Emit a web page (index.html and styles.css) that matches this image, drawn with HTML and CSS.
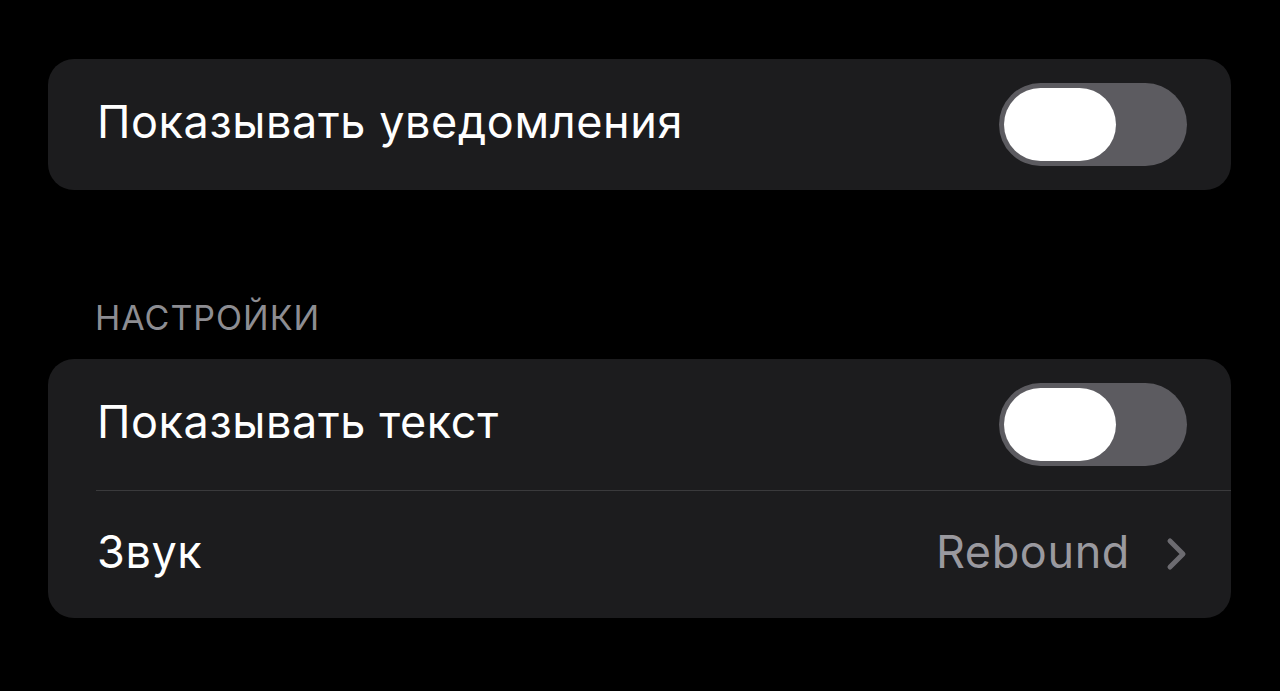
FILE: index.html
```html
<!DOCTYPE html>
<html lang="ru">
<head>
<meta charset="utf-8">
<title>Уведомления</title>
<link rel="stylesheet" href="styles.css">
</head>
<body>
<main class="settings">
  <section class="group">
    <div class="row">
      <span class="label">Показывать уведомления</span>
      <span class="switch"><span class="knob"></span></span>
    </div>
  </section>

  <h2 class="group-title">НАСТРОЙКИ</h2>
  <section class="group">
    <div class="row">
      <span class="label">Показывать текст</span>
      <span class="switch"><span class="knob"></span></span>
    </div>
    <div class="row row-link">
      <span class="label">Звук</span>
      <span class="value">Rebound
        <svg class="chevron" viewBox="0 0 22 34" width="22" height="34" aria-hidden="true">
          <path d="M4 4 L17 17 L4 30" fill="none" stroke="currentColor" stroke-width="5" stroke-linecap="round" stroke-linejoin="round"/>
        </svg>
      </span>
    </div>
  </section>
</main>
</body>
</html>
```
FILE: styles.css
```css
* { box-sizing: border-box; }

html, body {
  margin: 0;
  height: 100%;
  background: #000;
}

body {
  font-family: "Inter", "Liberation Sans", sans-serif;
  color: #fff;
}

.settings {
  padding: 59px 49px 0 48px;
  display: flex;
  flex-direction: column;
}

.group {
  background: #1c1c1e;
  border-radius: 26px;
  overflow: hidden;
}

.row {
  display: flex;
  align-items: center;
  justify-content: space-between;
  height: 131px;
  padding: 0 44px 0 49px;
  position: relative;
}

.row + .row::before {
  content: "";
  position: absolute;
  top: 0;
  left: 48px;
  right: 0;
  height: 1px;
  background: #3a3a3c;
}

.row-link { height: 128px; }

.label {
  font-size: 45px;
  letter-spacing: 0.6px;
  line-height: 1;
  margin-bottom: 6px;
}

.group-title {
  margin: 111px 0 24px 47px;
  font-size: 34px;
  font-weight: 400;
  color: #8d8d92;
  letter-spacing: 1px;
  line-height: 1;
}

.switch {
  width: 188px;
  height: 83px;
  border-radius: 42px;
  background: #5c5b60;
  padding: 5px;
  display: flex;
}

.knob {
  width: 112px;
  height: 73px;
  border-radius: 37px;
  background: #fff;
}

.value {
  display: flex;
  align-items: center;
  gap: 36px;
  font-size: 45px;
  letter-spacing: 0.6px;
  color: #9a999f;
  line-height: 1;
  margin-bottom: 6px;
}

.chevron {
  color: #6c6b70;
  margin-right: -1px;
  margin-top: 6px;
}
```
